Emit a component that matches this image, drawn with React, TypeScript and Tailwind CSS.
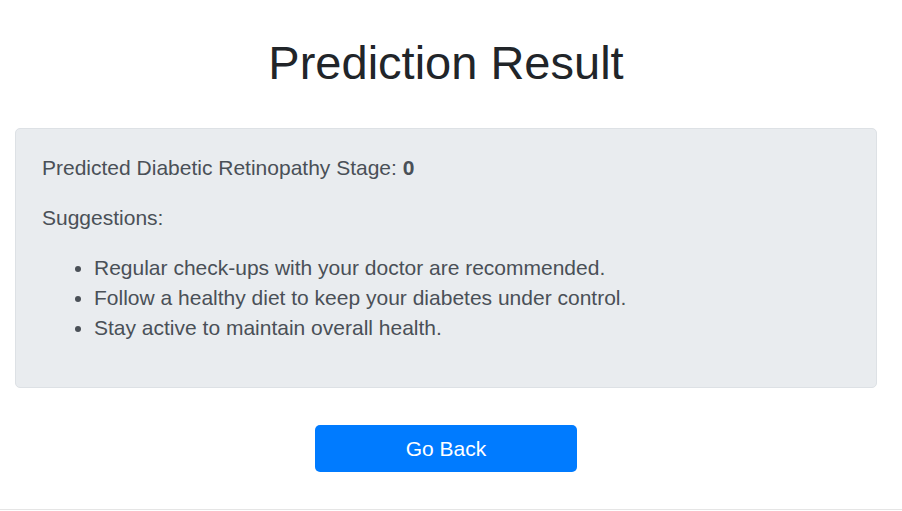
const suggestions = [
  "Regular check-ups with your doctor are recommended.",
  "Follow a healthy diet to keep your diabetes under control.",
  "Stay active to maintain overall health.",
];

const App = () => {
  return (
    <div
      className="h-[511px] w-full bg-white flex flex-col"
      style={{ fontFamily: '"Liberation Sans", Arial, sans-serif' }}
    >
      <div className="flex-1 pl-[15px] pr-[25px] pt-[35px]">
        <h1 className="text-center text-[47px] leading-[56px] text-[#212529] font-normal">
          Prediction Result
        </h1>
        <div className="mt-[37px] h-[260px] rounded-[5px] border border-[#dde1e5] bg-[#e9ecef] px-[26px] pt-[24px] text-[21px] leading-[30px] text-[#4a5057]">
          <p>
            Predicted Diabetic Retinopathy Stage: <strong className="font-bold">0</strong>
          </p>
          <p className="mt-[20px]">Suggestions:</p>
          <ul className="mt-[20px] list-disc pl-[52px]">
            {suggestions.map((s) => (
              <li key={s}>{s}</li>
            ))}
          </ul>
        </div>
        <div className="flex justify-center mt-[37px]">
          <button className="w-[262px] h-[47px] rounded-[5px] bg-[#007bff] text-white text-[21px] leading-[30px]">
            Go Back
          </button>
        </div>
      </div>
      <div className="h-[2px] border-t border-[#e5e5e5]" />
    </div>
  );
};

export default App;
